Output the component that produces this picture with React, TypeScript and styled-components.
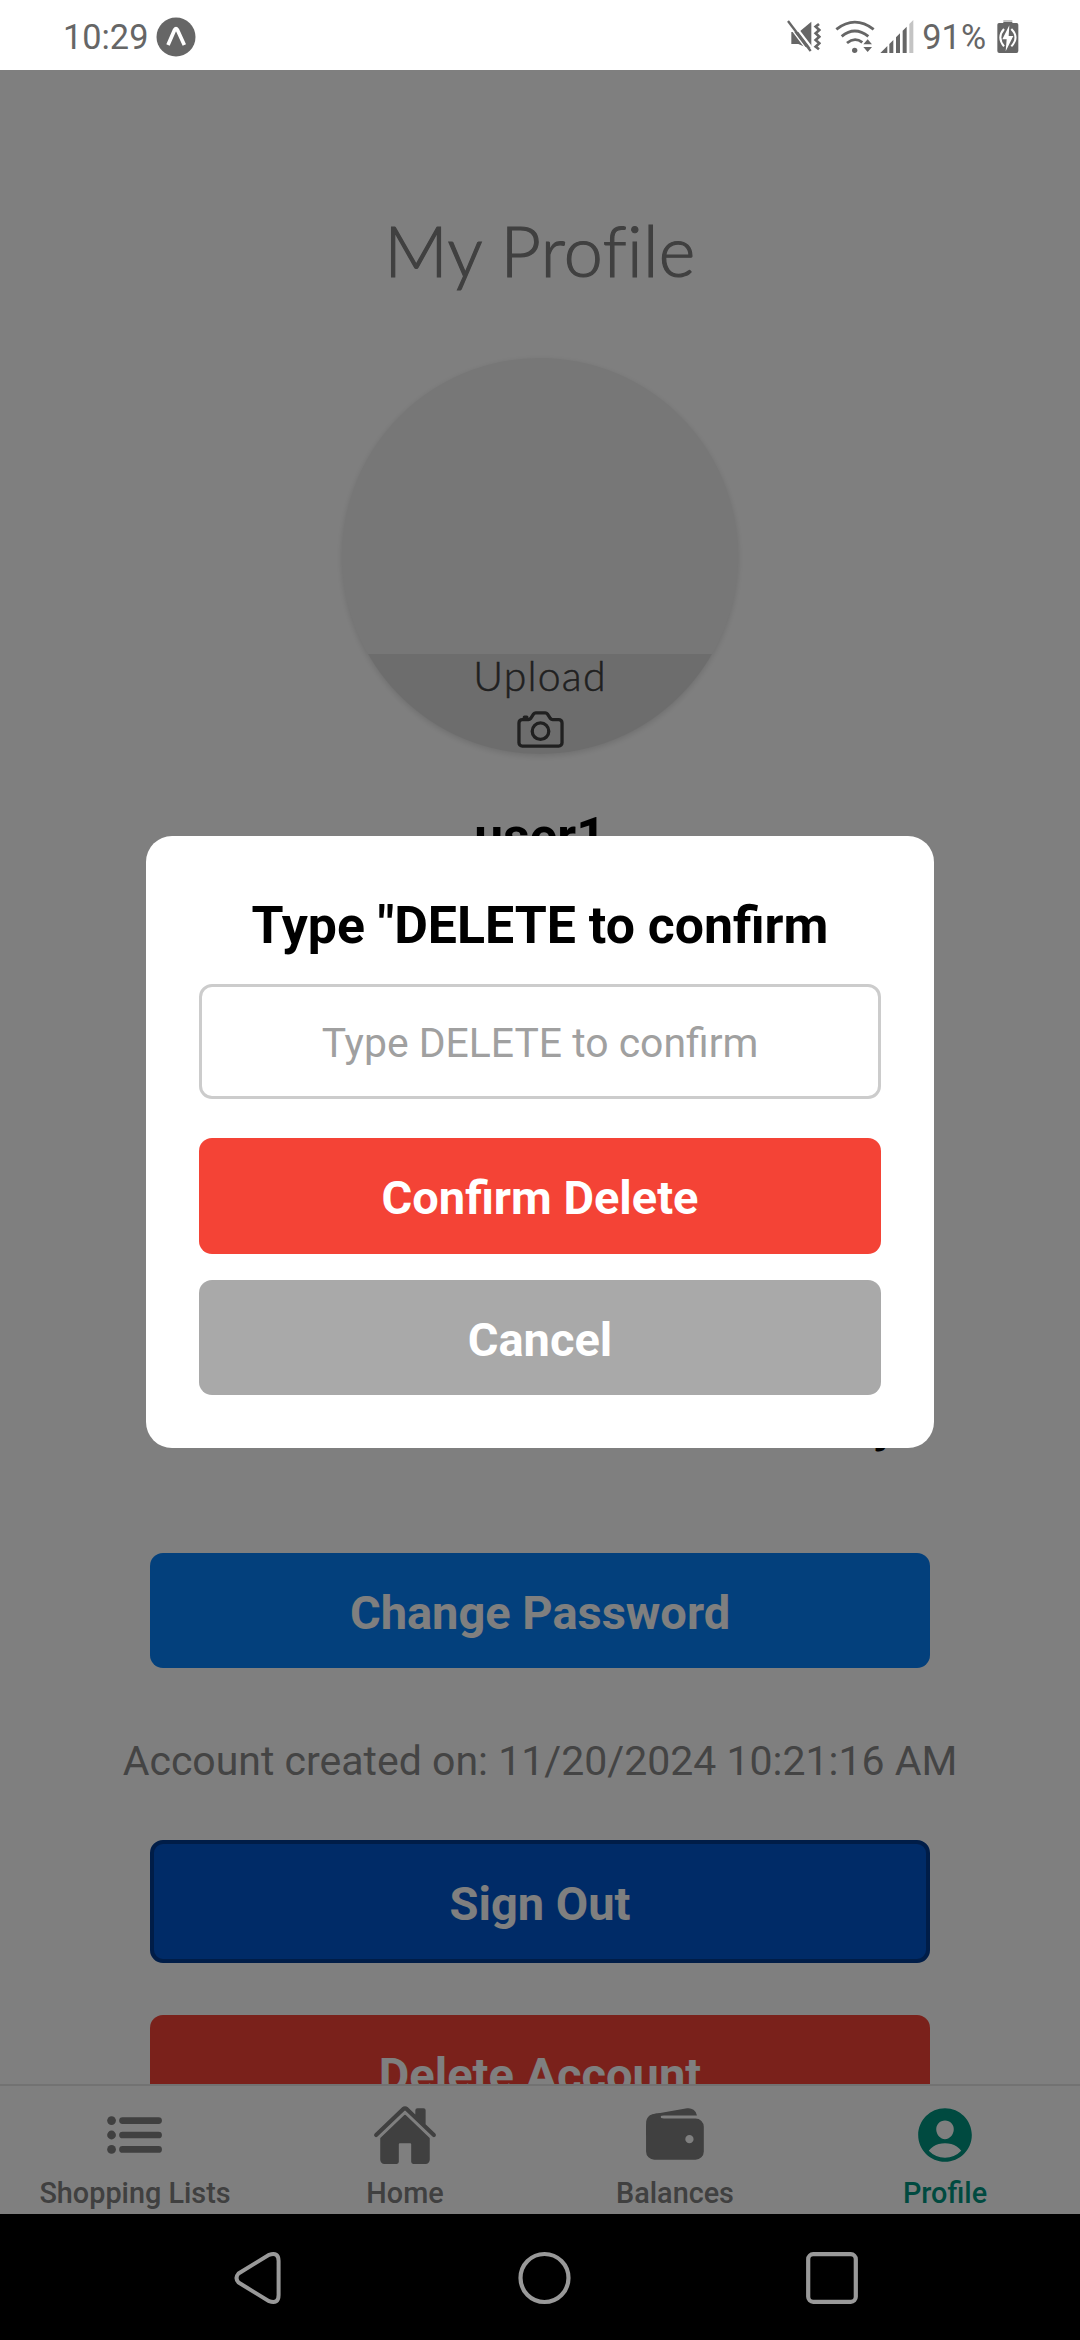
import React from "react";
import styled, { createGlobalStyle } from "styled-components";
import { IoCameraOutline, IoHome, IoPersonCircle, IoWallet } from "react-icons/io5";

const GlobalStyle = createGlobalStyle`
  * { box-sizing: border-box; }
  body { margin: 0; background: #000; font-family: Roboto, "Liberation Sans", sans-serif; }
  svg { display: block; flex: none; }
`;

const Phone = styled.div`
  width: 1080px;
  height: 2340px;
  display: flex;
  flex-direction: column;
  overflow: hidden;
`;

const StatusBar = styled.header`
  height: 70px;
  flex: none;
  display: flex;
  align-items: center;
  justify-content: space-between;
  padding: 4px 61px 0 63px;
  background: #fff;
  color: #666;
  font-size: 34.3px;
  line-height: 42px;
`;

const StatusGroup = styled.div<{ $gap: number }>`
  display: flex;
  align-items: center;
  gap: ${(p) => p.$gap}px;
`;

const AppArea = styled.div`
  position: relative;
  height: 2144px;
  flex: none;
  display: flex;
  flex-direction: column;
  background: #fff;
`;

const Screen = styled.main`
  height: 2014px;
  flex: none;
  overflow: hidden;
  display: flex;
  flex-direction: column;
  align-items: center;
  padding-top: 138px;

  & > * { flex: none; }
`;

const Title = styled.h1`
  margin: 0 0 66px;
  font: 300 70px/84px Lato, sans-serif;
  letter-spacing: 0.4px;
  -webkit-text-stroke: 1.2px #808080;
  color: #808080;
`;

const Avatar = styled.div`
  width: 396px;
  height: 396px;
  border-radius: 50%;
  overflow: hidden;
  display: flex;
  flex-direction: column;
  justify-content: flex-end;
  background: #eee;
  box-shadow: 0 2px 6px rgba(0, 0, 0, 0.13);
`;

const UploadStrip = styled.div`
  height: 100px;
  display: flex;
  flex-direction: column;
  align-items: center;
  padding-top: 2px;
  background: #dbdbdb;
  color: #404040;
  font: 300 41px/40px Lato, sans-serif;
  letter-spacing: 1.2px;
  -webkit-text-stroke: 0.5px #404040;

  svg { margin-top: 7px; }
`;

const UserName = styled.h2`
  margin: 53px 0 530px;
  font-size: 51.5px;
  line-height: 60px;
  font-weight: 700;
  color: #000;
`;

const SettingRow = styled.div`
  width: 780px;
  display: flex;
  justify-content: flex-end;
  padding-right: 33px;
  margin-bottom: 100px;
  font-size: 48px;
  line-height: 56px;
  font-weight: 700;
  color: #000;
`;

const Button = styled.button<{ $color: string; $border?: string; $height?: number }>`
  width: 100%;
  height: ${(p) => p.$height ?? 115}px;
  padding: 4px 0 0;
  border: ${(p) => (p.$border ? `4px solid ${p.$border}` : "none")};
  border-radius: 13px;
  background: ${(p) => p.$color};
  color: #fff;
  font: 700 47px/56px Roboto, sans-serif;
`;

const Actions = styled.div`
  width: 780px;
  display: flex;
  flex-direction: column;
  align-items: center;
`;

const CreatedOn = styled.p`
  margin: 68px 0 54px;
  font-size: 41px;
  line-height: 50px;
  white-space: nowrap;
  color: #888;
`;

const DeleteSlot = styled.div`
  width: 100%;
  margin-top: 52px;
`;

const TabBar = styled.nav`
  height: 130px;
  flex: none;
  display: grid;
  grid-template-columns: repeat(4, 1fr);
  border-top: 2px solid #e4e4e4;
  background: #fff;
`;

const Tab = styled.div<{ $active?: boolean }>`
  display: flex;
  flex-direction: column;
  align-items: center;
  gap: 10px;
  padding-top: 16px;
  color: ${(p) => (p.$active ? "#009480" : "#808080")};
  font-size: 28.8px;
  line-height: 30px;
  font-weight: 500;
`;

const Backdrop = styled.div`
  position: absolute;
  inset: 0;
  display: flex;
  align-items: center;
  justify-content: center;
  background: rgba(0, 0, 0, 0.5);
`;

const Dialog = styled.section`
  width: 788px;
  height: 612px;
  display: flex;
  flex-direction: column;
  padding: 54px 53px 53px;
  border-radius: 26px;
  background: #fff;
`;

const DialogTitle = styled.h3`
  margin: 0 0 22px;
  font-size: 51.8px;
  line-height: 72px;
  font-weight: 700;
  text-align: center;
  white-space: nowrap;
`;

const ConfirmInput = styled.input`
  height: 115px;
  flex: none;
  margin-bottom: 39px;
  padding: 2px 0 0;
  border: 3px solid #ccc;
  border-radius: 13px;
  background: #fff;
  text-align: center;
  font: 400 40.9px/50px Roboto, sans-serif;

  &::placeholder { color: #a0a0a0; opacity: 1; }
`;

const DialogButtons = styled.div`
  display: flex;
  flex-direction: column;
  gap: 26px;
`;

const SystemNav = styled.footer`
  height: 126px;
  flex: none;
  display: flex;
  align-items: center;
  padding: 2px 220px 0 232px;
  justify-content: space-between;
  background: #000;
`;

const ExpoIcon = () => (
  <svg width="40" height="40" viewBox="0 0 120 120">
    <circle cx="60" cy="60" r="58.5" fill="#666" />
    <path d="M36 84 56 38Q60 32 64 38L85 84" fill="none" stroke="#fff" strokeWidth="11" />
  </svg>
);

const MuteVibrateIcon = () => (
  <svg width="34" height="40" viewBox="80 48 102 120" fill="#666">
    <path d="M93 93H116L153 62V142L93 129Z" />
    <path d="M93 129H114L153 146V165H93Z" fill="#fff" />
    <path d="M87 52 158 145" stroke="#fff" strokeWidth="7" />
    <path d="M79 66 148 158" stroke="#fff" strokeWidth="4" />
    <path d="M83 60 151 150" stroke="#666" strokeWidth="7" />
    <path d="M176 69 166 77 177 87 166 97 177 107 166 117 177 127 166 137 176 145" fill="none" stroke="#666" strokeWidth="8" />
  </svg>
);

const WifiIcon = () => (
  <svg width="40" height="40" viewBox="224 48 120 120">
    <g fill="none" stroke="#666" strokeWidth="8.5">
      <path d="M228 85Q283 42 340 85" />
      <path d="M244 106Q283 74 324 106" />
      <path d="M260 126Q283 107 306 124" />
    </g>
    <circle cx="283" cy="148" r="8" fill="#666" />
    <path d="M322 115 335 130H309ZM309 138H335L322 153Z" fill="#666" />
  </svg>
);

const SignalIcon = () => (
  <svg width="34" height="40" viewBox="359 48 102 120" fill="#666">
    <path d="M360 156 381 135V156ZM387 129 399 117V156H387ZM407 109 419 97V156H407ZM427 89 439 77V156H427Z" />
    <path d="M447 69 459 57V156H447Z" fill="#c4c4c4" />
  </svg>
);

const BatteryIcon = () => (
  <svg width="22" height="40" viewBox="710 48 66 120">
    <path d="M729 57H756V64H729Z" fill="#c4c4c4" />
    <path d="M716 66H729V63H756V66H769Q774 66 774 71V150Q774 156 768 156H717Q711 156 711 150V71Q711 66 716 66Z" fill="#666" />
    <path d="M731 84Q709 109 731 136M753 84Q778 109 753 136" fill="none" stroke="#fff" strokeWidth="6" />
    <path d="M747 73 726 115H739L736 151 759 105H745Z" fill="#fff" />
  </svg>
);

const ListIcon = () => (
  <svg width="66" height="66" viewBox="0 0 512 512" fill="currentColor">
    <path d="M159 144H439M159 256H439M159 368H439" stroke="currentColor" strokeWidth="52" strokeLinecap="round" />
    <circle cx="74" cy="144" r="34" />
    <circle cx="74" cy="256" r="34" />
    <circle cx="74" cy="368" r="34" />
  </svg>
);

const BackIcon = () => (
  <svg width="52" height="56" viewBox="232 2250 52 56">
    <path d="M238.500 2273.500 269 2254.800Q278.600 2251.500 278.600 2261V2295Q278.600 2304.500 269 2301.200L238.500 2282.500Q234.500 2278 238.500 2273.500Z" fill="none" stroke="#999" strokeWidth="4" />
  </svg>
);

const CircleIcon = () => (
  <svg width="56" height="56" viewBox="0 0 56 56">
    <circle cx="28.500" cy="28" r="24" fill="none" stroke="#999" strokeWidth="4.200" />
  </svg>
);

const SquareIcon = () => (
  <svg width="56" height="56" viewBox="0 0 56 56">
    <rect x="4.200" y="4.200" width="47.600" height="47.600" rx="5" fill="none" stroke="#999" strokeWidth="4.200" />
  </svg>
);

export default function App() {
  return (
    <Phone>
      <GlobalStyle />
      <StatusBar>
        <StatusGroup $gap={8}>
          <span>10:29</span>
          <ExpoIcon />
        </StatusGroup>
        <StatusGroup $gap={8}>
          <StatusGroup $gap={14}>
            <MuteVibrateIcon />
            <StatusGroup $gap={5}>
              <WifiIcon />
              <SignalIcon />
            </StatusGroup>
          </StatusGroup>
          <StatusGroup $gap={11}>
            <span>91%</span>
            <BatteryIcon />
          </StatusGroup>
        </StatusGroup>
      </StatusBar>

      <AppArea>
        <Screen>
          <Title>My Profile</Title>
          <Avatar>
            <UploadStrip>
              <span>Upload</span>
              <IoCameraOutline size={53} />
            </UploadStrip>
          </Avatar>
          <UserName>user1</UserName>
          <SettingRow>y</SettingRow>
          <Actions>
            <Button $color="#0680f8">Change Password</Button>
            <CreatedOn>Account created on: 11/20/2024 10:21:16 AM</CreatedOn>
            <Button $color="#0056ce" $border="#003a90" $height={123}>Sign Out</Button>
            <DeleteSlot>
              <Button $color="#f44336">Delete Account</Button>
            </DeleteSlot>
          </Actions>
        </Screen>

        <TabBar>
          <Tab>
            <ListIcon />
            Shopping Lists
          </Tab>
          <Tab>
            <IoHome size={66} />
            Home
          </Tab>
          <Tab>
            <IoWallet size={66} />
            Balances
          </Tab>
          <Tab $active>
            <IoPersonCircle size={66} />
            Profile
          </Tab>
        </TabBar>

        <Backdrop>
          <Dialog>
            <DialogTitle>Type "DELETE to confirm</DialogTitle>
            <ConfirmInput placeholder="Type DELETE to confirm" />
            <DialogButtons>
              <Button $color="#f44336" $height={116}>Confirm Delete</Button>
              <Button $color="#a9a9a9">Cancel</Button>
            </DialogButtons>
          </Dialog>
        </Backdrop>
      </AppArea>

      <SystemNav>
        <BackIcon />
        <CircleIcon />
        <SquareIcon />
      </SystemNav>
    </Phone>
  );
}
